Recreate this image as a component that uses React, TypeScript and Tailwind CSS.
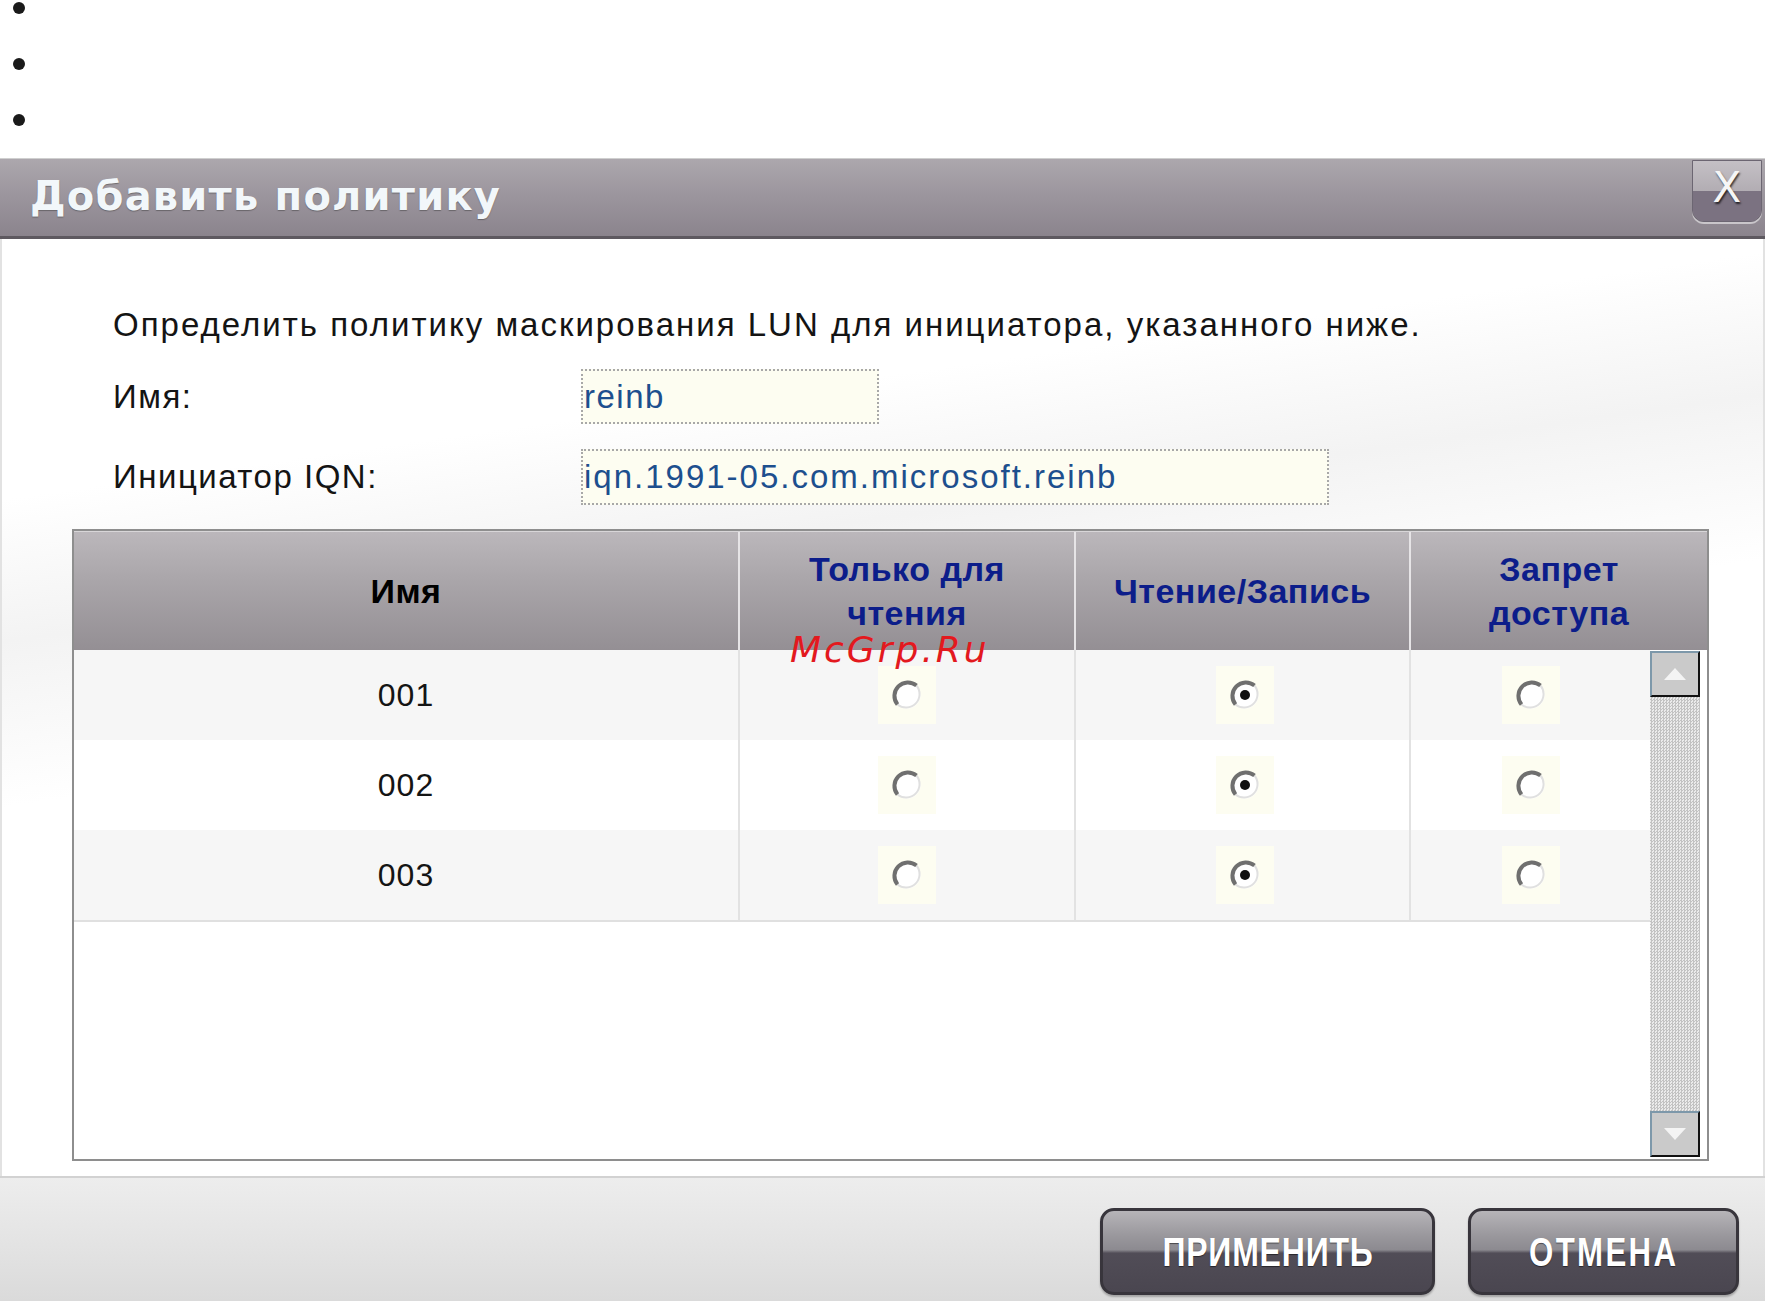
import React from "react";

function Radio({ checked }: { checked?: boolean }) {
  return (
    <div className="w-[58px] h-[58px] bg-[#fdfdf1] flex items-center justify-center">
      <svg width="34" height="34" viewBox="0 0 34 34">
        <circle cx="17" cy="17" r="13.5" fill="#ffffff" />
        <path d="M 26.5 7.5 A 13.5 13.5 0 0 1 7.5 26.5" stroke="#e0e0e0" strokeWidth="2" fill="none" />
        <path d="M 7.5 26.5 A 13.5 13.5 0 0 1 26.5 7.5" stroke="#6f6f6f" strokeWidth="4" fill="none" />
        {checked && <circle cx="17" cy="17" r="5" fill="#111111" />}
      </svg>
    </div>
  );
}

function ScrollBtn({ up }: { up?: boolean }) {
  return (
    <div className="h-[46px] w-full bg-[#cacaca] border-2 border-t-[#7d98aa] border-l-[#7d98aa] border-b-[#111] border-r-[#111] flex items-center justify-center">
      <svg width="22" height="12" viewBox="0 0 22 12">
        {up ? <polygon points="0,12 11,0 22,12" fill="#f4f4f4" /> : <polygon points="0,0 11,12 22,0" fill="#f4f4f4" />}
      </svg>
    </div>
  );
}

const rows = [
  { name: "001", bg: "bg-[#f6f6f6]" },
  { name: "002", bg: "bg-white" },
  { name: "003", bg: "bg-[#f6f6f6]" },
];

export default function App() {
  return (
    <div className="relative w-[1765px] h-[1301px] overflow-hidden bg-white font-['Liberation_Sans',Arial,sans-serif]">
      {/* bullets */}
      <div className="h-[158px] flex flex-col pt-[2px] pl-[13px] gap-[44px]">
        <div className="w-[12px] h-[12px] rounded-full bg-[#1a1a1a]" />
        <div className="w-[12px] h-[12px] rounded-full bg-[#1a1a1a]" />
        <div className="w-[12px] h-[12px] rounded-full bg-[#1a1a1a]" />
      </div>

      {/* dialog */}
      <div className="h-[1143px] flex flex-col">
        {/* title bar */}
        <div className="relative h-[81px] flex items-center pl-[30px] pb-[4px] bg-[linear-gradient(to_bottom,#aca7ad_0%,#9c969e_45%,#8b848d_100%)] border-b-[3px] border-[#5e5960] border-t border-t-[#cfcfcf]">
          <span className="font-['DejaVu_Sans',Verdana,sans-serif] font-bold text-[40px] text-[#f2f7fa] tracking-[1.2px] [text-shadow:0_1px_1px_rgba(60,60,60,0.5)]">
            Добавить политику
          </span>
          <div className="absolute right-[3px] top-[1px] w-[70px] h-[62px] rounded-b-[12px] overflow-hidden border border-[#6c6672] shadow-[0_2px_0_#c9c6ca] flex flex-col">
            <div className="h-[30px] bg-[linear-gradient(to_bottom,#c4c0c5,#b2adb3)]" />
            <div className="flex-1 bg-[#7b7281]" />
            <div className="absolute inset-0 flex items-center justify-center pb-[6px]">
              <span className="font-['DejaVu_Sans',sans-serif] text-[42px] leading-none text-[#f6f6f6] [text-shadow:1px_2px_2px_rgba(0,0,0,0.7)]">X</span>
            </div>
          </div>
        </div>

        {/* body */}
        <div className="h-[937px] flex flex-col border-l-2 border-r-2 border-[#e2e2e2] bg-[linear-gradient(172deg,#ffffff_0%,#ffffff_22%,#f3f3f3_34%,#ffffff_48%,#ffffff_100%)]">
          <div className="pt-[66px] pl-[111px] text-[33px] text-[#141414]">
            <div className="h-[40px] leading-[40px] tracking-[2px]">
              Определить политику маскирования LUN для инициатора, указанного ниже.
            </div>
            <div className="mt-[24px] h-[55px] flex items-center">
              <div className="w-[468px] tracking-[1.5px]">Имя:</div>
              <div className="w-[298px] h-[55px] bg-[#fdfdf1] border-2 border-dotted border-[#a8a8a8] flex items-center pl-[1px] text-[#1d4f8e] tracking-[1.5px]">
                reinb
              </div>
            </div>
            <div className="mt-[25px] h-[56px] flex items-center">
              <div className="w-[468px] tracking-[1.5px]">Инициатор IQN:</div>
              <div className="w-[748px] h-[56px] bg-[#fdfdf1] border-2 border-dotted border-[#a8a8a8] flex items-center pl-[1px] text-[#1d4f8e] tracking-[2px]">
                iqn.1991-05.com.microsoft.reinb
              </div>
            </div>
          </div>

          {/* table */}
          <div className="mt-[24px] ml-[70px] w-[1637px] h-[632px] border-2 border-[#8e8e8e] bg-white flex flex-col">
            <div className="h-[119px] grid grid-cols-[664px_336px_335px_298px] bg-[linear-gradient(to_bottom,#bbb7bb_0%,#aaa6aa_40%,#948f94_100%)] border-t border-t-[#d8d6d8] text-[34px] font-bold leading-[44px] text-center tracking-[0.5px]">
              <div className="flex items-center justify-center text-black">Имя</div>
              <div className="flex items-center justify-center border-l-2 border-[#e6e4e6] text-[#0c1d8a]">
                Только для
                <br />
                чтения
              </div>
              <div className="flex items-center justify-center border-l-2 border-[#e6e4e6] text-[#0c1d8a]">Чтение/Запись</div>
              <div className="flex items-center justify-center border-l-2 border-[#e6e4e6] text-[#0c1d8a]">
                Запрет
                <br />
                доступа
              </div>
            </div>
            <div className="h-[509px] flex">
              <div className="w-[1576px] flex flex-col">
                {rows.map((r) => (
                  <div key={r.name} className={`h-[90px] grid grid-cols-[664px_336px_335px_241px] ${r.bg}`}>
                    <div className="flex items-center justify-center text-[32px] text-[#141414] tracking-[1px]">{r.name}</div>
                    <div className="flex items-center justify-center border-l-2 border-[#e2e2e2] pr-[1px]">
                      <Radio />
                    </div>
                    <div className="flex items-center justify-center border-l-2 border-[#e2e2e2] pl-[4px]">
                      <Radio checked />
                    </div>
                    <div className="flex items-center justify-center border-l-2 border-[#e2e2e2]">
                      <Radio />
                    </div>
                  </div>
                ))}
                <div className="h-[2px] bg-[#e0e0e0]" />
              </div>
              <div className="w-[50px] mt-[1px] h-[506px] flex flex-col">
                <ScrollBtn up />
                <div className="flex-1 bg-[repeating-conic-gradient(#c2c2c2_0_25%,#ebebeb_0_50%)] bg-[length:3px_3px]" />
                <ScrollBtn />
              </div>
              <div className="w-[7px]" />
            </div>
          </div>
        </div>

        {/* footer */}
        <div className="h-[125px] border-t-2 border-[#d2d2d2] bg-[linear-gradient(to_bottom,#ededed_0%,#e4e4e4_50%,#dadada_100%)] flex justify-end items-start pt-[30px] pr-[26px] gap-[33px]">
          <div className="w-[335px] h-[87px] rounded-[14px] border-[3px] border-[#38353c] bg-[linear-gradient(to_bottom,#b6b4b8_0%,#9a989d_30%,#8c8a90_48%,#514d57_52%,#4a4650_100%)] shadow-[0_2px_2px_rgba(0,0,0,0.25)] flex items-center justify-center">
            <span className="inline-block scale-x-[0.8] font-bold text-[40px] text-white tracking-[1px] [text-shadow:0_1px_1px_rgba(0,0,0,0.5)]">ПРИМЕНИТЬ</span>
          </div>
          <div className="w-[271px] h-[87px] rounded-[14px] border-[3px] border-[#38353c] bg-[linear-gradient(to_bottom,#b6b4b8_0%,#9a989d_30%,#8c8a90_48%,#514d57_52%,#4a4650_100%)] shadow-[0_2px_2px_rgba(0,0,0,0.25)] flex items-center justify-center">
            <span className="inline-block scale-x-[0.78] font-bold text-[40px] text-white tracking-[3px] [text-shadow:0_1px_1px_rgba(0,0,0,0.5)]">ОТМЕНА</span>
          </div>
        </div>
      </div>

      {/* watermark */}
      <div className="absolute left-[790px] top-[628px] font-['DejaVu_Sans',sans-serif] italic text-[36px] leading-[44px] text-[#e3191e] tracking-[3px]">
        McGrp.Ru
      </div>
    </div>
  );
}
